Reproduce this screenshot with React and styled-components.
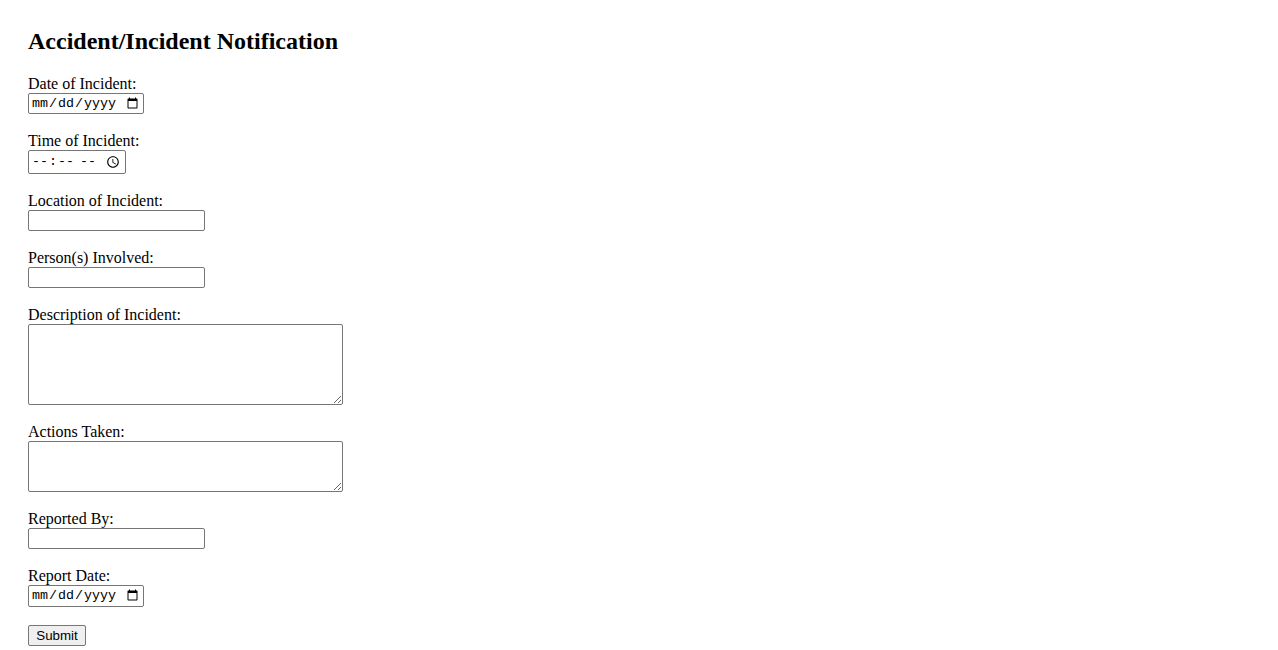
import React from "react";
import styled, { createGlobalStyle } from "styled-components";

const Global = createGlobalStyle`
  html, body { margin: 0; padding: 0; background: #fff; }
  body { font-family: "Liberation Serif", "Times New Roman", serif; color: #000; }
`;

const Page = styled.div`
  padding: 27px 28px 28px;
`;

const Title = styled.h2`
  margin: 0 0 20px;
  font-size: 24px;
  font-weight: bold;
  line-height: 28px;
`;

const Form = styled.form`
  display: flex;
  flex-direction: column;
  align-items: flex-start;
  gap: 18px;
`;

const Field = styled.div`
  display: flex;
  flex-direction: column;
  align-items: flex-start;
`;

const Label = styled.label`
  display: block;
  font-size: 16px;
  line-height: 18px;
`;

const Input = styled.input`
  box-sizing: border-box;
  margin: 0;
  width: ${(p) => p.$w}px;
  height: ${(p) => p.$h}px;
  border: 1px solid #767676;
  border-radius: 2px;
  background: #fff;
  padding: 1px 2px;
  font-family: ${(p) => (p.$mono ? '"Liberation Mono", "DejaVu Sans Mono", monospace' : '"Liberation Sans", Arial, sans-serif')};
  font-size: 13.33px;
  color: #000;
`;

const TextArea = styled.textarea`
  box-sizing: border-box;
  margin: 0;
  width: 315px;
  height: ${(p) => p.$h}px;
  border: 1px solid #767676;
  border-radius: 2px;
  padding: 2px;
  font-family: "Liberation Mono", monospace;
  font-size: 13.33px;
`;

const Button = styled.button`
  box-sizing: border-box;
  margin: 0;
  width: 58px;
  height: 21px;
  padding: 1px 6px;
  border: 1px solid #767676;
  border-radius: 2px;
  background: #efefef;
  font-family: "Liberation Sans", Arial, sans-serif;
  font-size: 13.33px;
  color: #000;
`;

export default function App() {
  return (
    <>
      <Global />
      <Page>
        <Title>Accident/Incident Notification</Title>
        <Form onSubmit={(e) => e.preventDefault()}>
          <Field>
            <Label htmlFor="d1">Date of Incident:</Label>
            <Input id="d1" type="date" $w={116} $h={21} $mono />
          </Field>
          <Field>
            <Label htmlFor="t1">Time of Incident:</Label>
            <Input id="t1" type="time" $w={98} $h={24} $mono />
          </Field>
          <Field>
            <Label htmlFor="loc">Location of Incident:</Label>
            <Input id="loc" type="text" $w={177} $h={21} />
          </Field>
          <Field>
            <Label htmlFor="per">Person(s) Involved:</Label>
            <Input id="per" type="text" $w={177} $h={21} />
          </Field>
          <Field>
            <Label htmlFor="desc">Description of Incident:</Label>
            <TextArea id="desc" $h={81} />
          </Field>
          <Field>
            <Label htmlFor="act">Actions Taken:</Label>
            <TextArea id="act" $h={51} />
          </Field>
          <Field>
            <Label htmlFor="rep">Reported By:</Label>
            <Input id="rep" type="text" $w={177} $h={21} />
          </Field>
          <Field>
            <Label htmlFor="rd">Report Date:</Label>
            <Input id="rd" type="date" $w={116} $h={22} $mono />
          </Field>
          <Button type="submit">Submit</Button>
        </Form>
      </Page>
    </>
  );
}
